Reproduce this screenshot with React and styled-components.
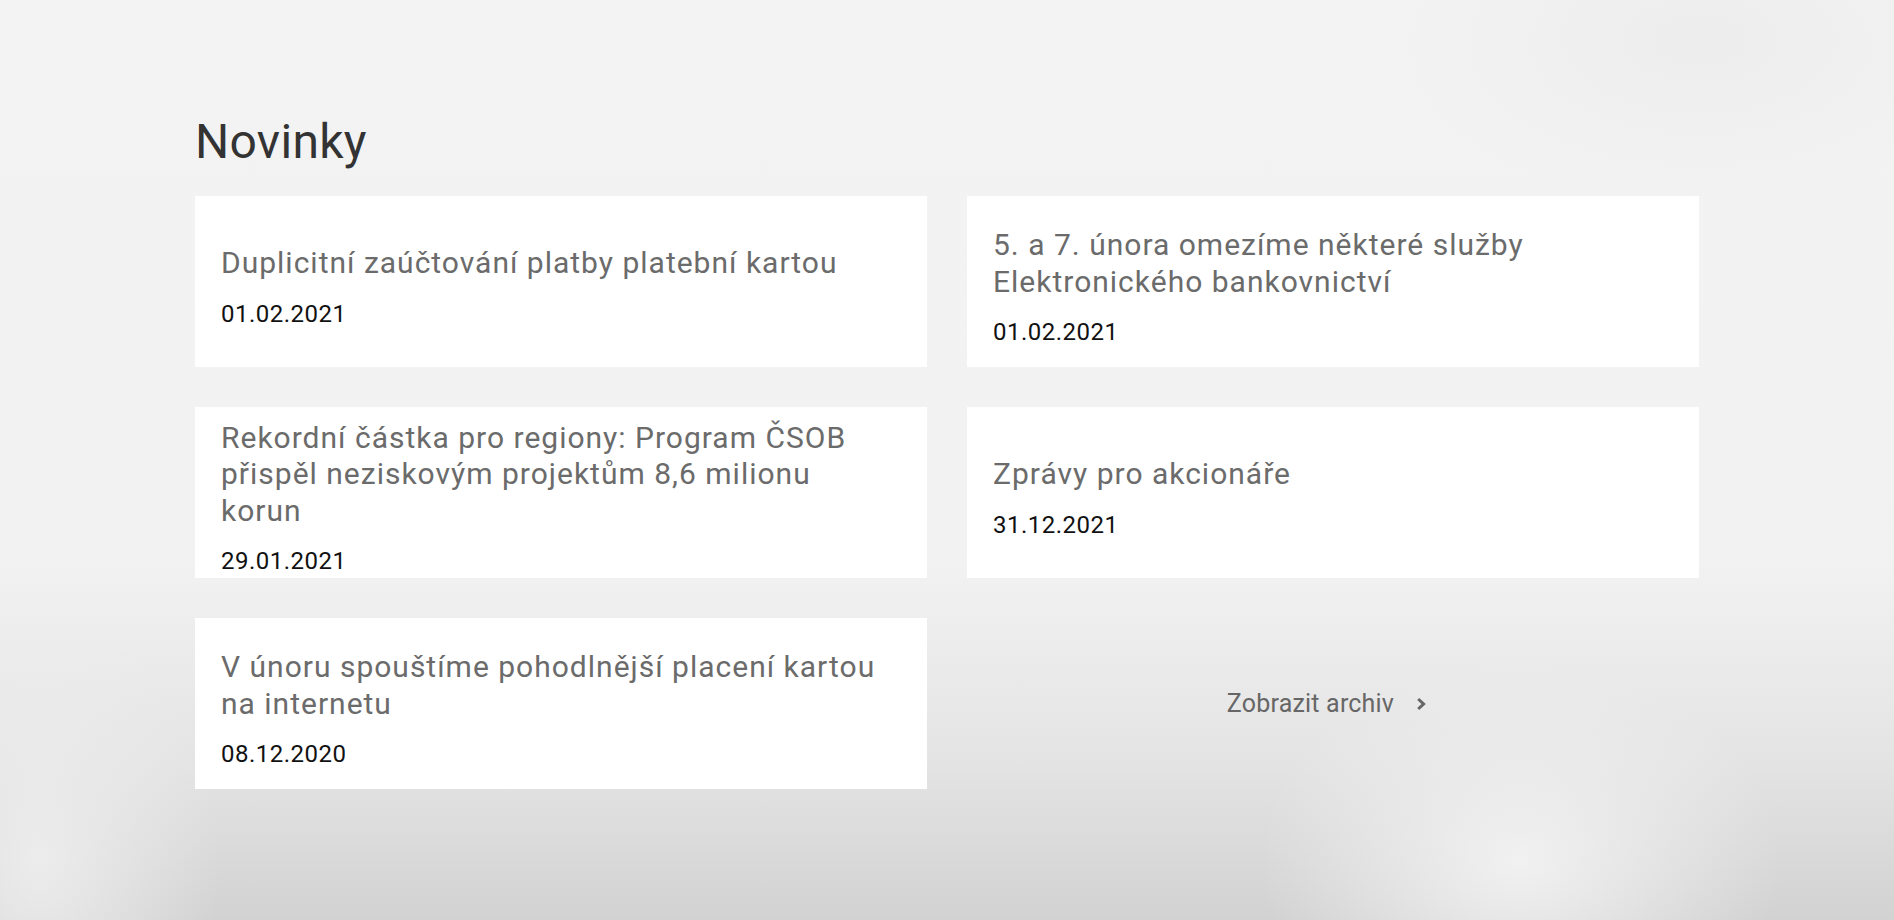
import React from 'react';
import styled, { createGlobalStyle } from 'styled-components';

const news = [
    { title: 'Duplicitní zaúčtování platby platební kartou', date: '01.02.2021' },
    { title: '5. a 7. února omezíme některé služby Elektronického bankovnictví', date: '01.02.2021' },
    { title: 'Rekordní částka pro regiony: Program ČSOB přispěl neziskovým projektům 8,6 milionu korun', date: '29.01.2021' },
    { title: 'Zprávy pro akcionáře', date: '31.12.2021' },
    { title: 'V únoru spouštíme pohodlnější placení kartou na internetu', date: '08.12.2020' },
];

function App(){
    return(
        <>
            <GlobalStyle />
            <Page>
                <Section>
                    <Heading>Novinky</Heading>
                    <NewsGrid>
                        {
                            news.map((item, i) => {
                                return (
                                    <NewsCard key={i} href="#">
                                        <NewsTitle>{item.title}</NewsTitle>
                                        <NewsDate>{item.date}</NewsDate>
                                    </NewsCard>
                                )
                            })
                        }
                        <ArchiveCell>
                            <ArchiveLink href="#">
                                Zobrazit archiv
                                <svg width="12" height="14" viewBox="0 0 12 14">
                                    <path d="M3.2 2 L8.6 7 L3.2 12" fill="none" stroke="#666" strokeWidth="3" />
                                </svg>
                            </ArchiveLink>
                        </ArchiveCell>
                    </NewsGrid>
                </Section>
            </Page>
        </>
    );
}

const GlobalStyle = createGlobalStyle`
    html, body {
        margin: 0;
        padding: 0;
    }
    body {
        font-family: Roboto, "Noto Sans", sans-serif;
    }
`

const Page = styled.div`
    min-height: 920px;
    box-sizing: border-box;
    padding-top: 114px;
    background:
        radial-gradient(ellipse 260px 200px at 1520px 860px, rgba(242,242,242,0.95), rgba(242,242,242,0)),
        radial-gradient(ellipse 180px 260px at 40px 860px, rgba(238,238,238,0.9), rgba(238,238,238,0)),
        radial-gradient(ellipse 300px 160px at 1700px 40px, rgba(236,236,236,0.9), rgba(236,236,236,0)),
        linear-gradient(to bottom, #f3f3f3 0px, #f2f2f2 560px, #e4e4e4 760px, #d2d2d2 920px);
`

const Section = styled.div`
    width: 1504px;
    margin: 0 auto;
`

const Heading = styled.h1`
    margin: 0 0 26px;
    font-size: 48px;
    line-height: 56px;
    letter-spacing: 0.3px;
    font-weight: 400;
    color: #333;
`

const NewsGrid = styled.div`
    display: grid;
    grid-template-columns: 1fr 1fr;
    grid-auto-rows: 171px;
    gap: 40px;
`

const NewsCard = styled.a`
    display: flex;
    flex-direction: column;
    justify-content: center;
    box-sizing: border-box;
    padding: 11px 46px 0 26px;
    background: #fff;
    text-decoration: none;
    overflow: hidden;
`

const NewsTitle = styled.div`
    font-size: 30px;
    line-height: 36.5px;
    letter-spacing: 1px;
    color: #6b6b6b;
`

const NewsDate = styled.div`
    margin-top: 18px;
    font-size: 24px;
    line-height: 29px;
    letter-spacing: 0.5px;
    color: #111;
`

const ArchiveCell = styled.div`
    display: flex;
    align-items: center;
    justify-content: center;
    padding-right: 12px;
`

const ArchiveLink = styled.a`
    display: flex;
    align-items: center;
    gap: 21px;
    font-size: 25px;
    letter-spacing: 0.2px;
    color: #666;
    text-decoration: none;
`

export default App;
